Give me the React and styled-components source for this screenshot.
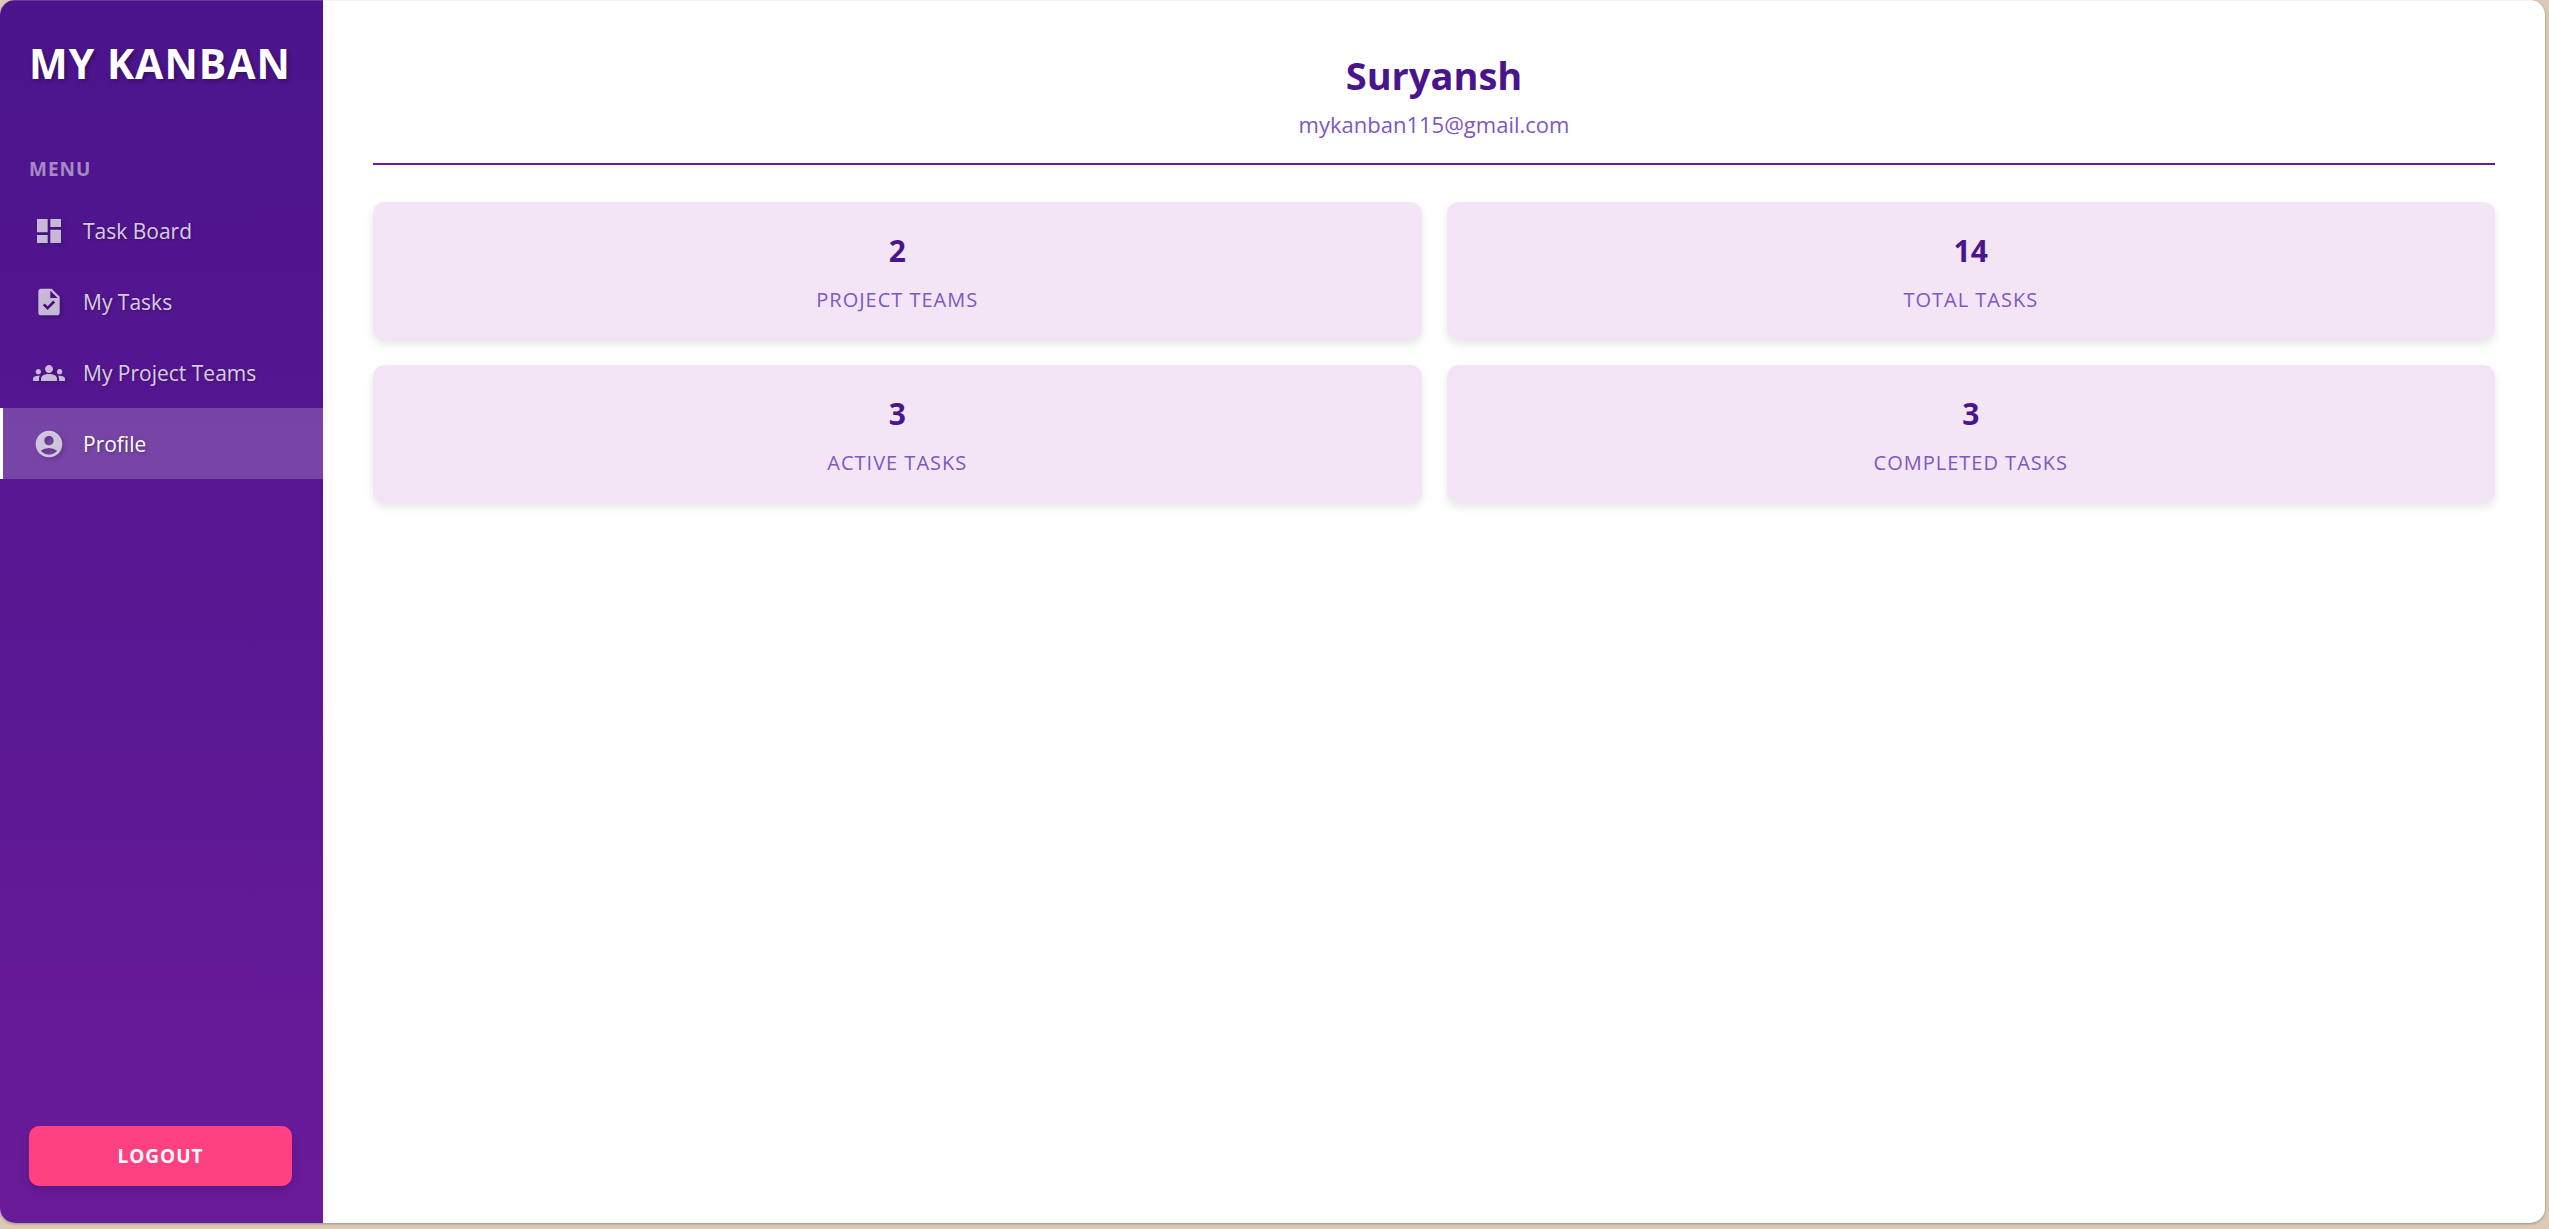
import React from "react";
import styled, { createGlobalStyle } from "styled-components";
import { MdAccountCircle, MdDashboard, MdGroups, MdTask } from "react-icons/md";

const GlobalStyle = createGlobalStyle`
  *, *::before, *::after { box-sizing: border-box; }
  body {
    margin: 0;
    background: #dccab6;
    font-family: "Segoe UI", "Open Sans", "Noto Sans", sans-serif;
  }
  h1, h2, p, ul, dl, dd { margin: 0; padding: 0; }
`;

const Page = styled.div`
  display: flex;
  min-height: 100vh;
  padding: 0 4px 6px 0;
`;

const Shell = styled.div`
  position: relative;
  display: flex;
  flex: 1;
  overflow: hidden;
  border-radius: 15px;
  background: #fff;
  box-shadow: 0 1px 3px rgba(0, 0, 0, 0.3);

  &::after {
    content: "";
    position: absolute;
    z-index: 2;
    inset: 0 0 auto;
    height: 1px;
    background: rgba(220, 202, 182, 0.22);
  }
`;

const Sidebar = styled.aside`
  display: flex;
  flex: 0 0 323px;
  flex-direction: column;
  background: linear-gradient(180deg, #4a148c, #6a1b9a);
  box-shadow: 2px 0 8px rgba(0, 0, 0, 0.05);
`;

const Logo = styled.h1`
  padding: 36px 29px 0;
  color: #fff;
  font-size: 41px;
  font-weight: 700;
  line-height: 54px;
  letter-spacing: 1px;
  white-space: nowrap;
  text-shadow: 2px 2px 4px rgba(0, 0, 0, 0.3);
`;

const MenuTitle = styled.h2`
  padding: 65px 29px 12px;
  color: rgba(255, 255, 255, 0.5);
  font-size: 19px;
  font-weight: 700;
  line-height: 28px;
  letter-spacing: 1px;
`;

const Menu = styled.ul`
  list-style: none;
`;

const MenuLink = styled.a`
  display: flex;
  align-items: center;
  gap: 18px;
  height: 71px;
  padding-left: ${(p) => (p.$active ? 30 : 33)}px;
  border-left: ${(p) => (p.$active ? "3px solid #fff" : "none")};
  background: ${(p) => (p.$active ? "rgba(255, 255, 255, 0.2)" : "transparent")};
  color: ${(p) => (p.$active ? "#fff" : "rgba(255, 255, 255, 0.8)")};
  font-size: 21px;
  font-weight: 500;
  text-decoration: none;
  text-shadow: 1px 1px 3px rgba(0, 0, 0, 0.3);
  white-space: nowrap;

  svg {
    width: 32px;
    height: 32px;
    color: rgba(255, 255, 255, 0.7);
    filter: drop-shadow(2px 2px 2px rgba(0, 0, 0, 0.3));
  }
`;

const LogoutButton = styled.button`
  height: 60px;
  margin: auto 31px 37px 29px;
  border: 0;
  border-radius: 10px;
  background: #ff4081;
  box-shadow: 0 4px 8px rgba(0, 0, 0, 0.15);
  color: #fff;
  font: 700 19px "Segoe UI", "Open Sans", "Noto Sans", sans-serif;
  letter-spacing: 1px;
  cursor: pointer;
`;

const Main = styled.main`
  flex: 1;
  min-width: 0;
  padding: 48px 50px;
`;

const ProfileHeader = styled.header`
  padding-bottom: 24px;
  border-bottom: 2px solid #6a1b9a;
  text-align: center;
`;

const Name = styled.h2`
  color: #4a148c;
  font-size: 38px;
  font-weight: 700;
  line-height: 54px;
`;

const Email = styled.p`
  padding-top: 7px;
  color: #7e57c2;
  font-size: 22px;
  font-weight: 500;
  line-height: 30px;
`;

const Stats = styled.dl`
  display: grid;
  grid-template-columns: repeat(2, 1fr);
  gap: 25px;
  padding-top: 37px;
`;

const StatCard = styled.div`
  display: flex;
  flex-direction: column-reverse;
  gap: 14px;
  padding: 28px 24px 26px;
  border-radius: 12px;
  background: #f3e5f5;
  box-shadow: 0 4px 8px rgba(0, 0, 0, 0.1);
  text-align: center;
`;

const StatValue = styled.dd`
  color: #4a148c;
  font-size: 30px;
  font-weight: 700;
  line-height: 42px;
`;

const StatLabel = styled.dt`
  color: #7e57c2;
  font-size: 20px;
  line-height: 28px;
  letter-spacing: 1px;
`;

const menuItems = [
  { label: "Task Board", Icon: MdDashboard },
  { label: "My Tasks", Icon: MdTask },
  { label: "My Project Teams", Icon: MdGroups },
  { label: "Profile", Icon: MdAccountCircle, active: true },
];

const stats = [
  { value: 2, label: "PROJECT TEAMS" },
  { value: 14, label: "TOTAL TASKS" },
  { value: 3, label: "ACTIVE TASKS" },
  { value: 3, label: "COMPLETED TASKS" },
];

export default function App() {
  return (
    <Page>
      <GlobalStyle />
      <Shell>
        <Sidebar>
          <Logo>MY KANBAN</Logo>
          <nav>
            <MenuTitle>MENU</MenuTitle>
            <Menu>
              {menuItems.map(({ label, Icon, active }) => (
                <li key={label}>
                  <MenuLink href="#" $active={active}>
                    <Icon aria-hidden="true" />
                    {label}
                  </MenuLink>
                </li>
              ))}
            </Menu>
          </nav>
          <LogoutButton type="button">LOGOUT</LogoutButton>
        </Sidebar>
        <Main>
          <ProfileHeader>
            <Name>Suryansh</Name>
            <Email>mykanban115@gmail.com</Email>
          </ProfileHeader>
          <Stats>
            {stats.map(({ value, label }) => (
              <StatCard key={label}>
                <StatLabel>{label}</StatLabel>
                <StatValue>{value}</StatValue>
              </StatCard>
            ))}
          </Stats>
        </Main>
      </Shell>
    </Page>
  );
}
